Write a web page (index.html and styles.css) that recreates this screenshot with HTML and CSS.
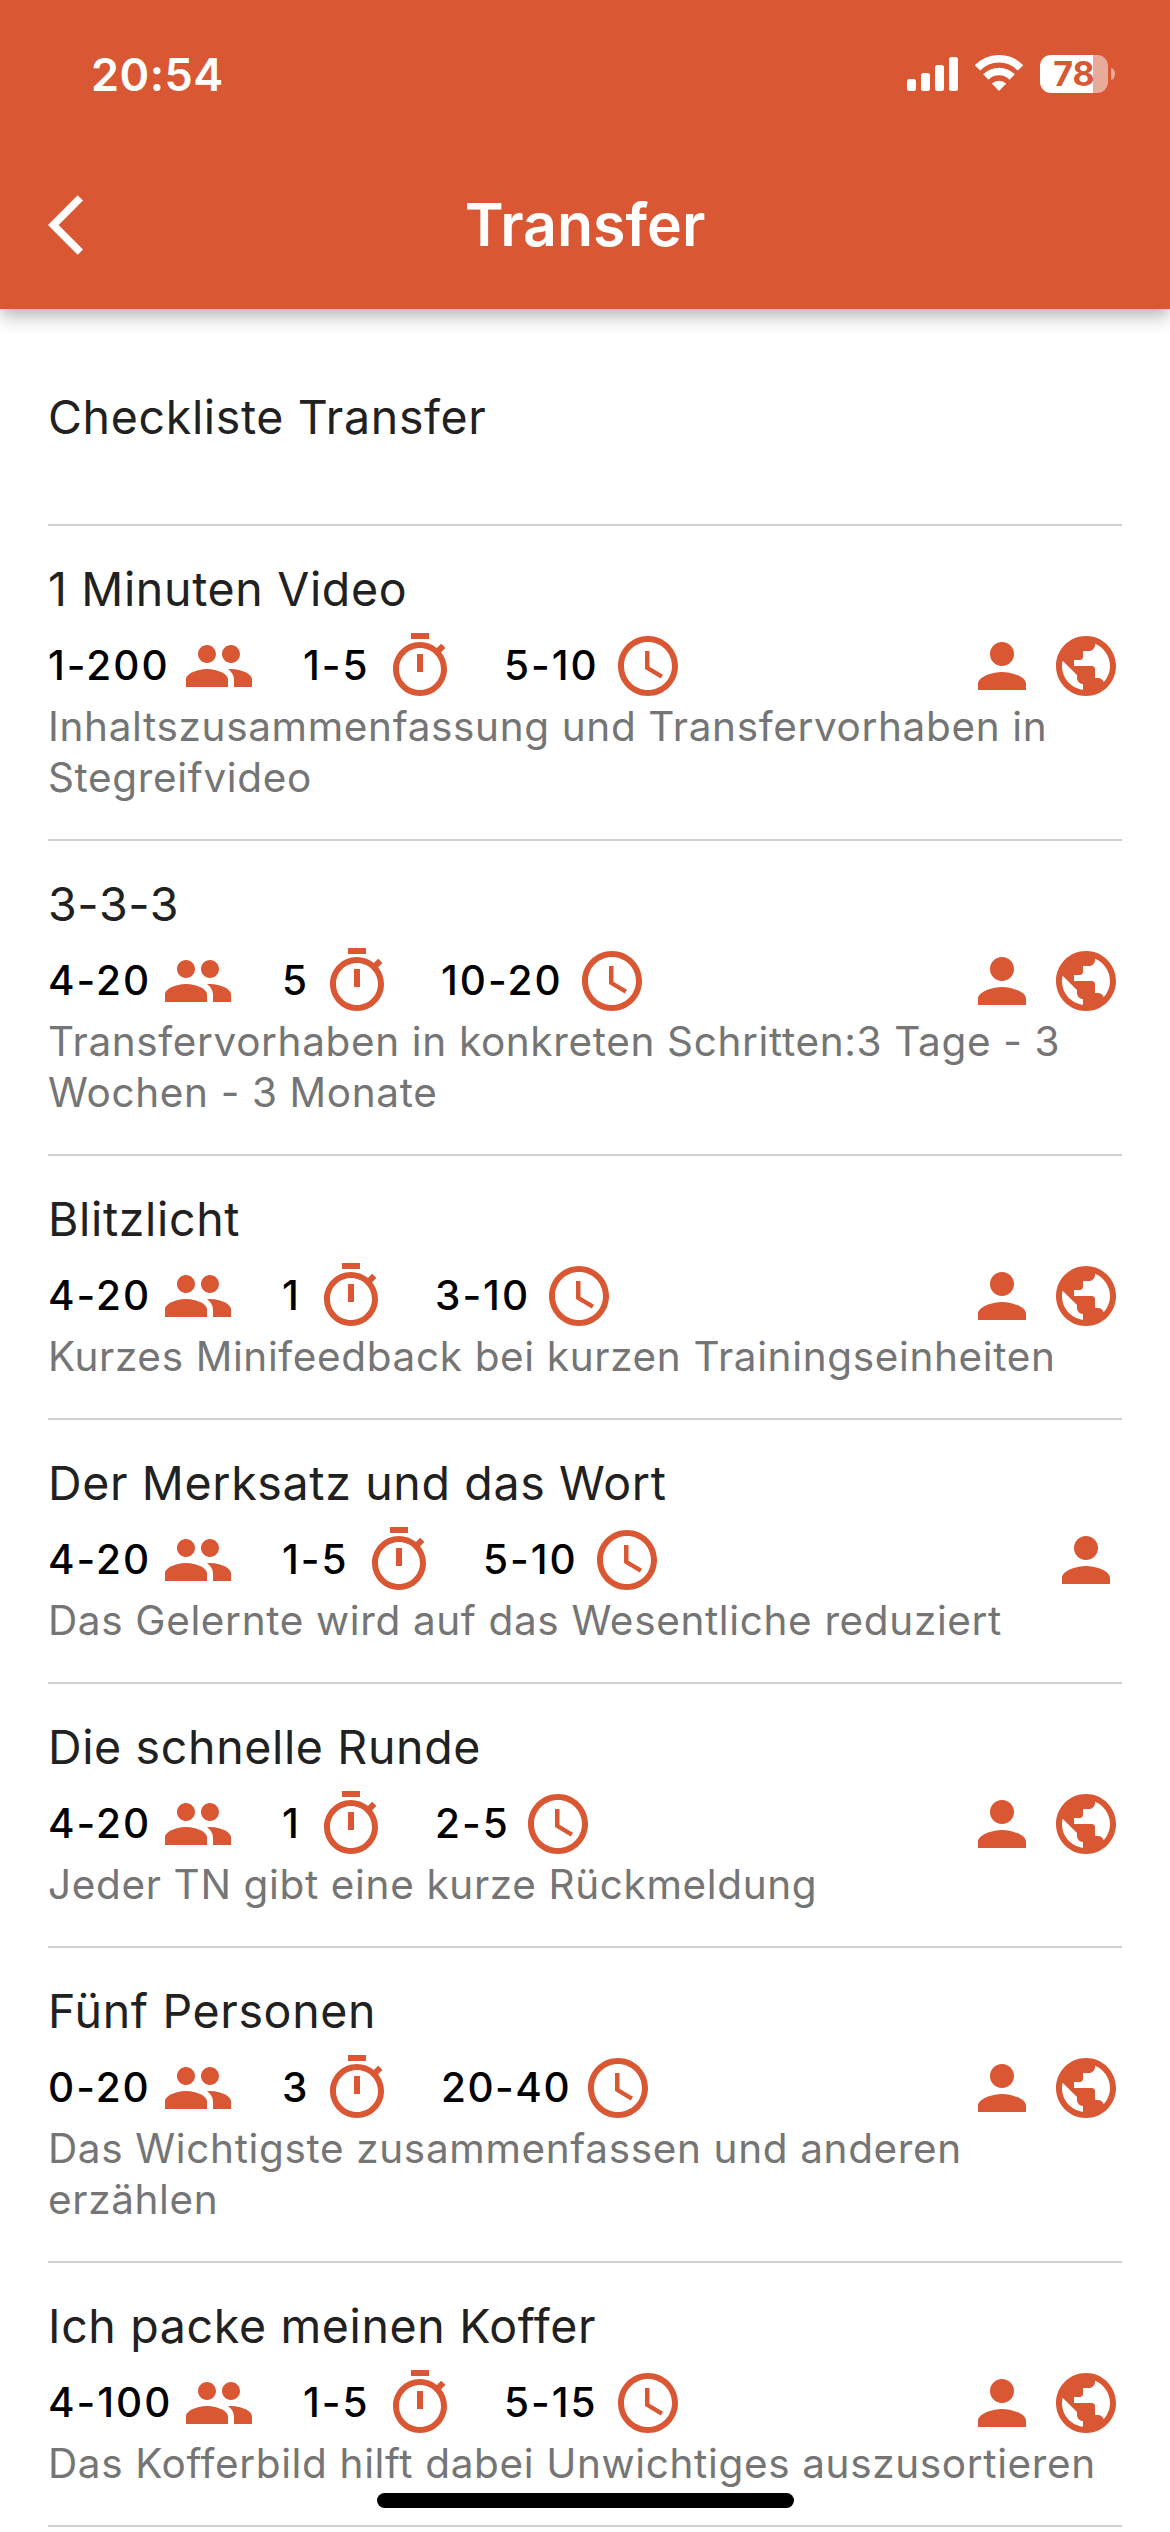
FILE: index.html
```html
<!DOCTYPE html>
<html lang="de">
<head>
<meta charset="utf-8">
<meta name="viewport" content="width=device-width">
<title>Transfer</title>
<link rel="stylesheet" href="styles.css">
</head>
<body>
<svg class="sprite" aria-hidden="true">
  <symbol id="people" viewBox="0 0 24 24"><path d="M16 11c1.66 0 2.99-1.34 2.99-3S17.66 5 16 5s-3 1.34-3 3 1.34 3 3 3zm-8 0c1.66 0 2.99-1.34 2.99-3S9.66 5 8 5 5 6.34 5 8s1.34 3 3 3zm0 2c-2.33 0-7 1.17-7 3.500V19h14v-2.500c0-2.330-4.670-3.500-7-3.500zm8 0c-.29 0-.62.020-.97.050 1.160.840 1.970 1.970 1.970 3.450V19h6v-2.500c0-2.330-4.670-3.500-7-3.500z"/></symbol>
  <symbol id="timer" viewBox="0 0 24 24"><path d="M15 1H9v2h6V1zm-4 13h2V8h-2v6zm8.030-6.610l1.420-1.420c-.43-.51-.9-.99-1.410-1.410l-1.420 1.420C16.070 4.740 14.120 4 12 4c-4.970 0-9 4.030-9 9s4.020 9 9 9 9-4.030 9-9c0-2.120-.74-4.070-1.970-5.610zM12 20c-3.870 0-7-3.130-7-7s3.130-7 7-7 7 3.130 7 7-3.130 7-7 7z"/></symbol>
  <symbol id="clock" viewBox="0 0 24 24"><path d="M11.990 2C6.470 2 2 6.480 2 12s4.470 10 9.990 10C17.520 22 22 17.520 22 12S17.520 2 11.990 2zM12 20c-4.420 0-8-3.580-8-8s3.580-8 8-8 8 3.580 8 8-3.580 8-8 8zm.5-13H11v6l5.250 3.150.75-1.230-4.500-2.670z"/></symbol>
  <symbol id="person" viewBox="0 0 24 24"><path d="M12 12c2.210 0 4-1.790 4-4s-1.790-4-4-4-4 1.790-4 4 1.790 4 4 4zm0 2c-2.670 0-8 1.340-8 4v2h16v-2c0-2.660-5.330-4-8-4z"/></symbol>
  <symbol id="globe" viewBox="0 0 24 24"><path d="M12 2C6.480 2 2 6.480 2 12s4.480 10 10 10 10-4.480 10-10S17.520 2 12 2zm-1 17.930c-3.950-.49-7-3.850-7-7.930 0-.62.080-1.210.21-1.790L9 15v1c0 1.100.9 2 2 2v1.930zm6.900-2.540c-.26-.81-1-1.390-1.900-1.390h-1v-3c0-.55-.45-1-1-1H8v-2h2c.55 0 1-.45 1-1V7h2c1.100 0 2-.9 2-2v-.41c2.930 1.190 5 4.060 5 7.410 0 2.080-.8 3.970-2.100 5.390z"/></symbol>
</svg>

<header class="app-header">
  <div class="status-bar">
    <span class="time">20:54</span>
    <div class="status-icons">
      <svg class="signal" viewBox="0 0 51 34"><rect y="22" width="9" height="12" rx="2.500"/><rect x="14" y="16" width="9" height="18" rx="2.500"/><rect x="28" y="8" width="9" height="26" rx="2.500"/><rect x="42" width="9" height="34" rx="2.500"/></svg>
      <svg class="wifi" viewBox="0 0 48 36"><path d="M2.500 13a29.700 29.700 0 0 1 43 0M10.800 22a18.600 18.600 0 0 1 26.400 0"/><path class="solid" d="M24 36l-7.200-7.400a10.500 10.500 0 0 1 14.400 0z"/></svg>
      <div class="battery"><span class="level">78</span><i class="nub"></i></div>
    </div>
  </div>
  <nav class="nav-bar">
    <svg class="back" viewBox="0 0 24 24"><path d="M11.670 3.870L9.900 2.100 0 12l9.900 9.900 1.770-1.770L3.540 12z"/></svg>
    <h1>Transfer</h1>
  </nav>
</header>

<main class="list">
  <article class="item plain"><h2>Checkliste Transfer</h2></article>
  <article class="item">
    <h2>1 Minuten Video</h2>
    <div class="meta"><span class="w-123">1-200</span><svg><use href="#people"/></svg><span class="w-69">1-5</span><svg><use href="#timer"/></svg><span class="w-96">5-10</span><svg><use href="#clock"/></svg><div class="tags"><svg><use href="#person"/></svg><svg><use href="#globe"/></svg></div></div>
    <p>Inhaltszusammenfassung und Transfervorhaben in Stegreifvideo</p>
  </article>
  <article class="item">
    <h2>3-3-3</h2>
    <div class="meta"><span class="w-102">4-20</span><svg><use href="#people"/></svg><span class="w-27">5</span><svg><use href="#timer"/></svg><span class="w-123">10-20</span><svg><use href="#clock"/></svg><div class="tags"><svg><use href="#person"/></svg><svg><use href="#globe"/></svg></div></div>
    <p>Transfervorhaben in konkreten Schritten:3 Tage - 3 Wochen - 3 Monate</p>
  </article>
  <article class="item">
    <h2>Blitzlicht</h2>
    <div class="meta"><span class="w-102">4-20</span><svg><use href="#people"/></svg><span class="w-21">1</span><svg><use href="#timer"/></svg><span class="w-96">3-10</span><svg><use href="#clock"/></svg><div class="tags"><svg><use href="#person"/></svg><svg><use href="#globe"/></svg></div></div>
    <p>Kurzes Minifeedback bei kurzen Trainingseinheiten</p>
  </article>
  <article class="item">
    <h2>Der Merksatz und das Wort</h2>
    <div class="meta"><span class="w-102">4-20</span><svg><use href="#people"/></svg><span class="w-69">1-5</span><svg><use href="#timer"/></svg><span class="w-96">5-10</span><svg><use href="#clock"/></svg><div class="tags"><svg><use href="#person"/></svg></div></div>
    <p>Das Gelernte wird auf das Wesentliche reduziert</p>
  </article>
  <article class="item">
    <h2>Die schnelle Runde</h2>
    <div class="meta"><span class="w-102">4-20</span><svg><use href="#people"/></svg><span class="w-21">1</span><svg><use href="#timer"/></svg><span class="w-75">2-5</span><svg><use href="#clock"/></svg><div class="tags"><svg><use href="#person"/></svg><svg><use href="#globe"/></svg></div></div>
    <p>Jeder TN gibt eine kurze Rückmeldung</p>
  </article>
  <article class="item">
    <h2>Fünf Personen</h2>
    <div class="meta"><span class="w-102">0-20</span><svg><use href="#people"/></svg><span class="w-27">3</span><svg><use href="#timer"/></svg><span class="w-129">20-40</span><svg><use href="#clock"/></svg><div class="tags"><svg><use href="#person"/></svg><svg><use href="#globe"/></svg></div></div>
    <p>Das Wichtigste zusammenfassen und anderen erzählen</p>
  </article>
  <article class="item">
    <h2>Ich packe meinen Koffer</h2>
    <div class="meta"><span class="w-123">4-100</span><svg><use href="#people"/></svg><span class="w-69">1-5</span><svg><use href="#timer"/></svg><span class="w-96">5-15</span><svg><use href="#clock"/></svg><div class="tags"><svg><use href="#person"/></svg><svg><use href="#globe"/></svg></div></div>
    <p>Das Kofferbild hilft dabei Unwichtiges auszusortieren</p>
  </article>
</main>
<div class="home-indicator"></div>
</body>
</html>
```
FILE: styles.css
```css
* { box-sizing: border-box; }
body {
  margin: 0;
  height: 2532px;
  overflow: hidden;
  background: #fff;
  font-family: Inter, "Liberation Sans", sans-serif;
}
h1, h2, p { margin: 0; }
svg { display: block; flex: none; }
.sprite { position: absolute; width: 0; height: 0; }

.app-header {
  position: relative;
  height: 309px;
  background: #d95732;
  color: #fff;
  box-shadow: 0 6px 12px -3px rgba(0,0,0,.16), 0 12px 15px rgba(0,0,0,.11), 0 3px 30px rgba(0,0,0,.08);
}
.status-bar {
  display: flex;
  justify-content: space-between;
  align-items: center;
  height: 141px;
  padding: 7px 55px 0 91px;
}
.time { font-size: 45px; font-weight: 600; letter-spacing: .5px; }
.status-icons { display: flex; align-items: center; fill: #fff; }
.signal { width: 51px; height: 34px; margin-right: 17px; }
.wifi { width: 48px; height: 36px; margin: 0 17px 2px 0; fill: none; stroke: #fff; stroke-width: 7.600px; }
.wifi .solid { fill: #fff; stroke: none; }
.battery { display: flex; align-items: center; gap: 3px; }
.level {
  width: 68px;
  height: 38px;
  border-radius: 11px;
  background: linear-gradient(90deg, #fff 53px, #e8ab99 53px);
  color: #d95732;
  font-size: 34px;
  line-height: 38px;
  font-weight: 650;
  text-align: center;
}
.nub { width: 4px; height: 12px; border-radius: 0 4px 4px 0 / 0 6px 6px 0; background: #e8ab99; }

.nav-bar {
  display: grid;
  grid-template-columns: 72px 1fr 72px;
  align-items: center;
  height: 168px;
  padding: 0 48px;
}
.back { width: 72px; height: 72px; fill: #fff; }
h1 { font-size: 59px; line-height: 72px; font-weight: 600; text-align: center; }

.list { padding: 0 48px; }
.item {
  padding: 35px 0 36px;
  border-bottom: 2px solid #cfcfcf;
}
.plain { height: 217px; padding-top: 80px; }
h2 {
  height: 69px;
  font-size: 46.500px;
  line-height: 57px;
  font-weight: 400;
  letter-spacing: .650px;
  color: #212121;
}
.meta {
  display: flex;
  align-items: center;
  height: 72px;
  color: #000;
  font-size: 40.500px;
  font-weight: 450;
  letter-spacing: 2px;
}
.meta span { flex: none; line-height: 50px; margin-top: -1px; white-space: nowrap; }
.meta svg { width: 72px; height: 72px; fill: #d95732; }
.meta > svg { margin: 0 48px 0 12px; }
.w-21 { width: 21px; }
.w-27 { width: 27px; }
.w-69 { width: 69px; }
.w-75 { width: 75px; }
.w-96 { width: 96px; }
.w-102 { width: 102px; }
.w-123 { width: 123px; }
.w-129 { width: 129px; letter-spacing: 1.500px; }
.tags { display: flex; gap: 12px; margin-left: auto; }
p {
  margin-top: -1px;
  font-size: 40.500px;
  line-height: 51px;
  letter-spacing: .640px;
  color: #757575;
}
.home-indicator {
  position: absolute;
  left: 377px;
  top: 2493px;
  width: 417px;
  height: 15px;
  border-radius: 8px;
  background: #000;
}
```
